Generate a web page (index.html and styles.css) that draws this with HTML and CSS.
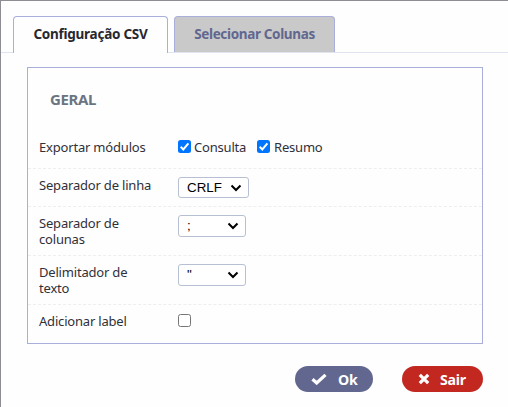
FILE: index.html
```html
<!DOCTYPE html>
<html lang="pt-BR">
<head>
<meta charset="utf-8">
<title>Configuração CSV</title>
<link rel="stylesheet" href="styles.css">
</head>
<body>
<main class="dialog">
  <nav class="tabs">
    <a class="tab active">Configuração CSV</a>
    <a class="tab">Selecionar Colunas</a>
  </nav>
  <section class="panel">
    <h2>GERAL</h2>
    <div class="row"><span class="label modules">Exportar módulos</span>
      <div class="field checks">
        <span class="box on"><svg viewBox="0 0 13 13"><path d="M2.7 6.8 5.3 9.4 10.4 3.3"/></svg></span><span class="consulta">Consulta</span>
        <span class="box on"><svg viewBox="0 0 13 13"><path d="M2.7 6.8 5.3 9.4 10.4 3.3"/></svg></span><span class="resumo">Resumo</span>
      </div></div>
    <div class="row"><span class="label">Separador de linha</span>
      <div class="field"><div class="select wide"><span>CRLF</span><svg viewBox="0 0 12 8"><path d="M1.5 1.5 6 6 10.5 1.5"/></svg></div></div></div>
    <div class="row"><span class="label">Separador de<br>colunas</span>
      <div class="field"><div class="select"><span>;</span><svg viewBox="0 0 12 8"><path d="M1.5 1.5 6 6 10.5 1.5"/></svg></div></div></div>
    <div class="row"><span class="label">Delimitador de<br>texto</span>
      <div class="field"><div class="select"><span>"</span><svg viewBox="0 0 12 8"><path d="M1.5 1.5 6 6 10.5 1.5"/></svg></div></div></div>
    <div class="row"><span class="label">Adicionar label</span>
      <div class="field single"><span class="box"></span></div></div>
  </section>
  <footer class="actions">
    <div class="button ok"><svg viewBox="0 0 16 12"><path d="M1.5 6.2 5.7 10 14.5 1.8"/></svg><span>Ok</span></div>
    <div class="button exit"><svg viewBox="0 0 12 12"><path d="M1.8 1.8 10.2 10.2M10.2 1.8 1.8 10.2"/></svg><span>Sair</span></div>
  </footer>
</main>
</body>
</html>
```
FILE: styles.css
```css
* { box-sizing: border-box; }
body {
  margin: 0;
  background: #fefefe;
  color: #30303a;
  font: 13px/16px "Noto Sans", "Open Sans", sans-serif;
}
.dialog {
  height: 407px;
  border-top: 1px solid #8f8d92;
  border-left: 1px solid #8f8d94;
  padding-top: 15px;
  overflow: hidden;
}
.tabs {
  display: flex;
  gap: 6px;
  height: 37px;
  padding-left: 12px;
  border-bottom: 1px solid #dfe4f1;
}
.tab {
  width: 161px;
  height: 36px;
  border: 1px solid #a9aedb;
  border-bottom: 0;
  border-radius: 4px 4px 0 0;
  background: #c9c9c9;
  color: #62678f;
  font-size: 13.5px;
  font-weight: 700;
  line-height: 34px;
  text-align: center;
  white-space: nowrap;
  letter-spacing: -.35px;
}
.tab.active {
  width: 155px;
  height: 37px;
  background: #fefefe;
  color: #27272f;
  letter-spacing: -.25px;
}
.panel {
  width: 456px;
  height: 277px;
  margin: 14px 0 0 26px;
  border: 1px solid #a9aedb;
}
h2 {
  height: 63px;
  margin: 0;
  padding-left: 22px;
  color: #6b7582;
  font-size: 15px;
  line-height: 63px;
  letter-spacing: -.35px;
}
.row {
  display: flex;
  min-height: 38px;
  padding: 8px 0 8px 11px;
  border-bottom: 1px dashed #eeeeef;
}
.row:last-child { border-bottom: 0; }
.label {
  width: 139px;
  letter-spacing: -.19px;
}
.field { display: flex; height: 16px; }
.checks { align-items: center; letter-spacing: -.2px; }
.single { align-items: center; }
.single .box { margin-top: -1px; }
.box {
  width: 13px;
  height: 13px;
  border: 1px solid #767676;
  border-radius: 2.5px;
  background: #fff;
}
.box.on { border: 0; background: #0075ff; margin-top: -2px; }
.box svg { display: block; width: 13px; height: 13px; }
path { fill: none; stroke: currentColor; stroke-width: 2; }
.on path { stroke: #fff; }
.consulta { width: 63px; margin-left: 3px; }
.resumo { margin-left: 4px; }
.select {
  display: flex;
  align-items: center;
  justify-content: space-between;
  width: 68px;
  height: 22px;
  padding: 0 6px 0 8px;
  border: 1px solid #b6c0d2;
  border-radius: 3px;
  background: #fff;
  color: #000;
  font-family: "Liberation Sans", sans-serif;
  font-size: 13.33px;
}
.select.wide { width: 71px; height: 21px; }
.select svg { width: 12px; height: 8px; }
.actions {
  display: flex;
  justify-content: flex-end;
  gap: 29px;
  margin: 22px 25px 0 0;
}
.button {
  display: flex;
  align-items: center;
  width: 78px;
  height: 26px;
  padding-left: 16px;
  border-radius: 13px;
  background: #62678f;
  color: #fff;
  font-size: 14.2px;
  font-weight: 700;
  letter-spacing: -.25px;
}
.button path { stroke-width: 3.2; }
.button span { padding-top: 1px; }
.ok svg { width: 16px; height: 12px; margin-right: 11px; }
.exit { width: 81px; background: #c22820; }
.exit svg { width: 12px; height: 12px; margin-right: 10px; }
```
